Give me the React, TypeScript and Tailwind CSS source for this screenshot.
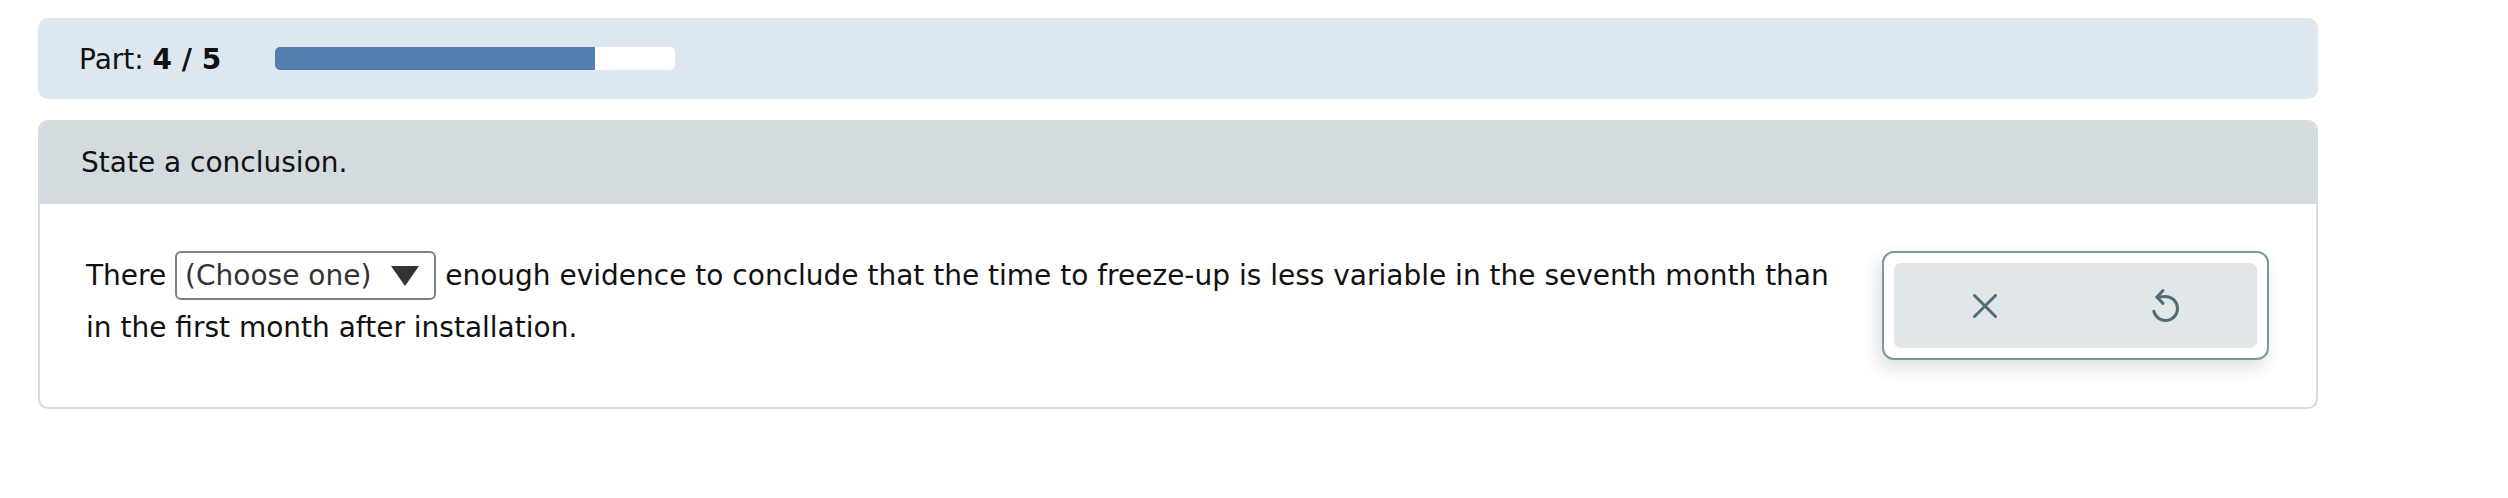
import { ReactNode } from 'react';

const iconColor = '#4e6b78';

function PartProgress({ part, total }: { part: number; total: number }) {
  const pct = (part / total) * 100;
  return (
    <div className="flex h-[81px] items-center rounded-[10px] bg-[#dde7f0] pl-[41px]">
      <div className="w-[196px] pt-[3px] text-[28px] text-[#111]">
        Part: <b>{part} / {total}</b>
      </div>
      <div className="h-[23px] w-[400px] overflow-hidden rounded-[5px] bg-white">
        <div className="h-full bg-[#527eb0]" style={{ width: `${pct}%` }} />
      </div>
    </div>
  );
}

function ChooseOne() {
  return (
    <span className="mb-[4px] inline-flex h-[49px] items-center gap-[20px] rounded-[6px] border-2 border-[#808080] bg-white pl-[8px] pr-[15px] text-[#333]">
      <span className="leading-normal">(Choose one)</span>
      <svg width="28" height="20" viewBox="0 0 28 20">
        <polygon points="0,0 28,0 14,20" fill="#333" />
      </svg>
    </span>
  );
}

function IconButton({ children, label }: { children: ReactNode; label: string }) {
  return (
    <button aria-label={label} className="flex flex-1 items-center justify-center">
      {children}
    </button>
  );
}

function ActionBox() {
  return (
    <div className="h-[109px] w-[387px] shrink-0 rounded-[12px] border-2 border-[#7e96a1] bg-white p-[10px] shadow-[-4px_8px_18px_rgba(40,60,70,0.16)]">
      <div className="flex h-full rounded-[7px] bg-[#e1e6e9]">
        <IconButton label="Clear">
          <svg width="24" height="24" viewBox="0 0 24 24" fill="none" stroke={iconColor} strokeWidth="3" strokeLinecap="round">
            <path d="M1.5 1.5 22.5 22.5M22.5 1.5 1.5 22.5" />
          </svg>
        </IconButton>
        <IconButton label="Undo">
          <svg width="44" height="44" viewBox="0 0 44 44" fill="none" stroke={iconColor} strokeWidth="3" strokeLinecap="round" strokeLinejoin="round">
            <path d="M19 6.5 13 13 19 19.5" />
            <path d="M13 13.2 C15.5 12.8 18.5 12.5 21.5 12.5 A12 12 0 1 1 9.8 27.2" />
          </svg>
        </IconButton>
      </div>
    </div>
  );
}

export default function App() {
  return (
    <div className="min-h-screen bg-white px-[38px] pt-[18px] font-['DejaVu_Sans','Verdana',sans-serif] text-[#111]">
      <div className="w-[2280px]">
        <PartProgress part={4} total={5} />

        <section className="mt-[21px] overflow-hidden rounded-[10px] border-2 border-[#d5dde1]">
          <div className="flex h-[82px] items-center bg-[#d3dbdf] pl-[41px] text-[28px]">
            State a conclusion.
          </div>
          <div className="flex items-start py-[47px] pl-[46px] pr-[47px]">
            <p className="flex-1 text-[28px] leading-[48px]">
              There <ChooseOne /> enough evidence to conclude that the time to freeze-up is less variable in the
              seventh month than in the first month after installation.
            </p>
            <div className="ml-[40px]">
              <ActionBox />
            </div>
          </div>
        </section>
      </div>
    </div>
  );
}
